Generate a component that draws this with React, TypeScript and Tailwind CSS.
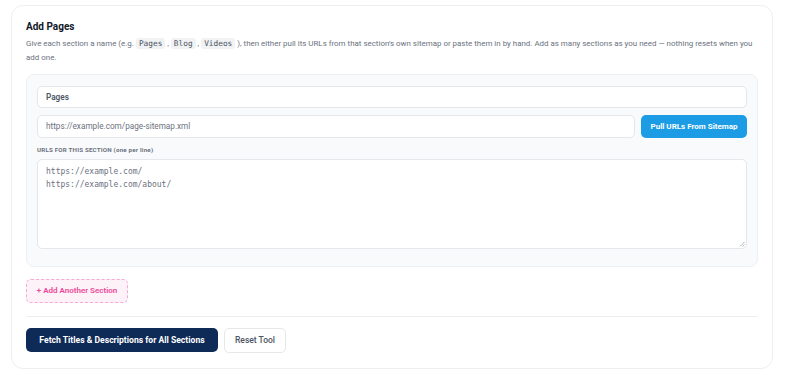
import React from "react";

const Chip = ({ children }: { children: React.ReactNode }) => (
  <code className="inline-block rounded-[3px] bg-[#f1f2f4] px-[3px] font-['DejaVu_Sans_Mono',monospace] text-[7.8px] leading-[11px] text-[#4b5563]">
    {children}
  </code>
);

export default function App() {
  return (
    <div className="min-h-[372px] w-[800px] bg-white font-['Roboto',sans-serif]">
      <div className="ml-[11px] pt-[5px]">
        <div className="w-[762px] rounded-[12px] border border-[#eceef1] bg-white px-[14px] pt-[14px] pb-[15px]">
          <h2 className="text-[10px] leading-[14px] font-bold text-[#111827]">Add Pages</h2>
          <p className="mt-[3px] w-[740px] text-[7.95px] leading-[14px] text-[#6b7280]">
            <span>Give each section a name (e.g. </span>
            <Chip>Pages</Chip>
            <span> , </span>
            <Chip>Blog</Chip>
            <span> , </span>
            <Chip>Videos</Chip>
            <span> ), then either pull its URLs from that section's own sitemap or paste them in by hand. Add as many sections as you need — nothing resets when you</span>
            <br />
            <span>add one.</span>
          </p>

          <div className="mt-[9px] rounded-[8px] border border-[#eef0f3] bg-[#f9fafb] px-[10px] pt-[11px] pb-[17px]">
            <div className="flex h-[22px] items-center rounded-[5px] border border-[#e5e7eb] bg-white px-[8px] text-[8.2px] font-semibold text-[#4b5563]">
              Pages
            </div>
            <div className="mt-[7px] flex gap-[6px]">
              <div className="flex h-[23px] flex-1 items-center rounded-[5px] border border-[#e5e7eb] bg-white px-[8px] text-[8.2px] text-[#6b7280]">
                https://example.com/page-sitemap.xml
              </div>
              <button className="h-[23px] w-[106px] rounded-[5px] bg-[#1b9ce4] text-[8px] font-bold text-white">
                Pull URLs From Sitemap
              </button>
            </div>
            <div className="mt-[8px] text-[6.2px] leading-[9px] font-bold tracking-[0.2px] text-[#6b7280]">
              URLS FOR THIS SECTION <span className="normal-case">(one per line)</span>
            </div>
            <div className="relative mt-[4px] h-[90px] rounded-[5px] border border-[#e5e7eb] bg-white px-[8px] pt-[5px] font-['DejaVu_Sans_Mono',monospace] text-[8px] leading-[13px] text-[#6b7280]">
              <div>https://example.com/</div>
              <div>https://example.com/about/</div>
              <svg className="absolute right-[1px] bottom-[1px]" width="6" height="6" viewBox="0 0 6 6">
                <path d="M5.5 1 L1 5.5 M5.5 3.5 L3.5 5.5" stroke="#9ca3af" strokeWidth="0.8" />
              </svg>
            </div>
          </div>

          <button className="mt-[12px] h-[24px] w-[102px] rounded-[5px] border border-dashed border-[#f9a8d4] bg-[#fdf2f8] text-[8px] font-semibold text-[#ec4899]">
            + Add Another Section
          </button>

          <div className="mt-[13px] border-t border-[#eceef1]" />

          <div className="mt-[11px] flex gap-[6px]">
            <button className="h-[24px] w-[192px] rounded-[5px] bg-[#0e2a56] text-[8.6px] font-bold text-white">
              Fetch Titles &amp; Descriptions for All Sections
            </button>
            <button className="h-[25px] w-[62px] rounded-[5px] border border-[#e5e7eb] bg-white text-[8.5px] font-medium text-[#4b5563]">
              Reset Tool
            </button>
          </div>
        </div>
      </div>
    </div>
  );
}
